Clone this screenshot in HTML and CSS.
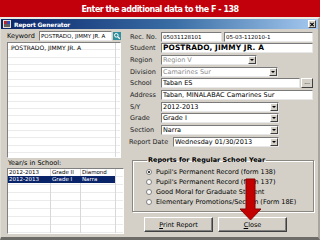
FILE: index.html
```html
<!DOCTYPE html>
<html>
<head>
<meta charset="utf-8">
<link rel="stylesheet" href="styles.css">
</head>
<body>
<div class="banner">Enter the additional data to the F - 138</div>
<div class="window">
  <div class="titlebar">
    <svg class="appicon" width="8" height="8" viewBox="0 0 8 8"><rect x="0" y="0" width="8" height="8" fill="#e8e0d0"/><rect x="1" y="1" width="3" height="3" fill="#c02020"/><rect x="4" y="1" width="3" height="3" fill="#2050c0"/><rect x="1" y="4" width="6" height="3" fill="#606060"/></svg>
    <span class="ttext">Report Generator</span>
    <div class="xbtn"><svg width="7" height="7" viewBox="0 0 7 7"><path d="M1.5 1.5 L5.5 5.5 M5.5 1.5 L1.5 5.5" stroke="#000" stroke-width="1.3"/></svg></div>
  </div>
  <div class="body">
    <div class="left">
      <div class="kwrow">
        <span class="kwlabel">Keyword</span>
        <div class="field kwinput">POSTRADO, JIMMY JR. A</div>
        <div class="searchbtn"><svg width="8" height="8" viewBox="0 0 8 8"><rect width="8" height="8" fill="#2f8f9f"/><circle cx="3.3" cy="3.3" r="1.8" fill="none" stroke="#fff" stroke-width="1"/><path d="M4.6 4.6 L6.8 6.8" stroke="#fff" stroke-width="1.3"/></svg></div>
      </div>
      <div class="listbox">
        <div class="litem">POSTRADO, JIMMY JR. A</div>
      </div>
      <div class="ylabel">Year/s in School:</div>
      <div class="ytable">
        <div class="yrow"><span class="c1">2012-2013</span><span class="c2">Grade II</span><span class="c3">Diamond</span></div>
        <div class="yrow sel"><span class="c1">2012-2013</span><span class="c2">Grade I</span><span class="c3">Narra</span></div>
      </div>
    </div>
    <div class="right">
      <div class="form">
        <div class="row"><span class="lbl">Rec. No.</span><div class="field w61 small">05031128101</div><div class="field wrec small">05-03-112010-1</div></div>
        <div class="row"><span class="lbl">Student</span><div class="field wfull bold">POSTRADO, JIMMY JR. A</div></div>
        <div class="row"><span class="lbl">Region</span><div class="select w96 dis"><span class="stext">Region V</span><span class="dd"></span></div></div>
        <div class="row"><span class="lbl">Division</span><div class="select w117 dis"><span class="stext">Camarines Sur</span><span class="dd"></span></div></div>
        <div class="row"><span class="lbl">School</span><div class="field w139">Taban ES</div><div class="dots">...</div></div>
        <div class="row"><span class="lbl">Address</span><div class="field wfull">Taban, MINALABAC Camarines Sur</div></div>
        <div class="row"><span class="lbl">S/Y</span><div class="select w118"><span class="stext">2012-2013</span><span class="dd"></span></div></div>
        <div class="row"><span class="lbl">Grade</span><div class="select w118"><span class="stext">Grade I</span><span class="dd"></span></div></div>
        <div class="row"><span class="lbl">Section</span><div class="select w118"><span class="stext">Narra</span><span class="dd"></span></div></div>
        <div class="row"><span class="lbl lblwide">Report Date</span><div class="select w106"><span class="stext">Wednesday 01/30/2013</span><span class="dd"></span></div></div>
      </div>
      <fieldset class="group">
        <legend>Reports for Regular School Year</legend>
        <div class="radio"><span class="rc on"></span>Pupil's Permanent Record (form 138)</div>
        <div class="radio"><span class="rc"></span>Pupil's Permanent Record (form 137)</div>
        <div class="radio"><span class="rc"></span>Good Moral for Graduate Student</div>
        <div class="radio"><span class="rc"></span>Elementary Promotions/Section (Form 18E)</div>
      </fieldset>
      <div class="buttons">
        <div class="btn"><u>P</u>rint Report</div>
        <div class="btn"><u>C</u>lose</div>
      </div>
    </div>
  </div>
</div>
<svg class="arrow" width="24" height="44" viewBox="0 0 24 44"><path d="M7 1 H16 V31 H22 L11.5 42 L1 31 H7 Z" fill="#c20000" stroke="#8c0000" stroke-width="1"/></svg>
</body>
</html>
```
FILE: styles.css
```css
* { box-sizing: border-box; margin: 0; padding: 0; }
html, body { width: 320px; height: 240px; overflow: hidden; }
body {
  position: relative;
  background: #fff;
  font-family: "DejaVu Sans", Verdana, sans-serif;
  font-size: 6.5px;
  color: #000;
}
.banner {
  height: 17px;
  background: #c1000c;
  color: #fff;
  font-family: "DejaVu Sans", sans-serif;
  font-weight: bold;
  font-size: 8px;
  letter-spacing: -0.5px;
  text-align: center;
  line-height: 19px;
}
.window {
  height: 223px;
  background: #d4d0c8;
  border-top: 2px solid #ece9e2;
  border-left: 1px solid #e0ddd6;
  border-right: 2px solid #a8a59e;
  border-bottom: 3px solid #6e6c68;
  display: flex;
  flex-direction: column;
}
.titlebar {
  height: 10px;
  background: linear-gradient(to right, #0a246a, #3a6ea5 55%, #a6caf0);
  display: flex;
  align-items: center;
  padding: 0 2px 0 2px;
  color: #fff;
  font-weight: bold;
  font-size: 6px;
}
.appicon { margin-right: 3px; }
.ttext { flex: 1; letter-spacing: -0.2px; }
.xbtn {
  width: 8px; height: 8px;
  background: #d4d0c8;
  border: 1px solid; border-color: #fff #404040 #404040 #fff;
  display: flex; align-items: center; justify-content: center;
}
.xbtn svg { display: block; }
.body {
  flex: 1;
  display: flex;
  padding: 2px 0 0 6px;
}
.left { width: 117px; display: flex; flex-direction: column; }
.kwrow { height: 10px; display: flex; align-items: center; }
.kwlabel { width: 32px; }
.kwinput { width: 73px; height: 9px; font-size: 5.5px; }
.searchbtn { width: 9px; height: 9px; display: flex; align-items: center; justify-content: center; }
.field {
  background: #fff;
  border: 1px solid;
  border-color: #7a7a7a #e8e8e8 #e8e8e8 #7a7a7a;
  height: 10px;
  line-height: 8px;
  padding-left: 1px;
  white-space: nowrap;
  overflow: hidden;
}
.listbox {
  margin-top: 1px;
  width: 114px;
  height: 116px;
  background-color: #fff;
  background-image:
    linear-gradient(to right, transparent 107px, #d8d8d8 107px, #d8d8d8 108px, transparent 108px),
    repeating-linear-gradient(to bottom, transparent 0, transparent 6.33px, #ebebeb 6.33px, #ebebeb 7.33px);
  border: 1px solid; border-color: #808080 #fff #fff #808080;
  padding: 1px 0 0 3px;
  font-size: 6px;
}
.litem { line-height: 7.33px; }
.ylabel { height: 10px; line-height: 11px; padding-left: 1px; }
.ytable {
  width: 117px;
  height: 66px;
  background-color: #fff;
  background-image:
    linear-gradient(to right, transparent 42px, #d8d8d8 42px, #d8d8d8 43px, transparent 43px, transparent 72px, #d8d8d8 72px, #d8d8d8 73px, transparent 73px, transparent 107px, #d8d8d8 107px, #d8d8d8 108px, transparent 108px),
    repeating-linear-gradient(to bottom, transparent 0, transparent 7px, #ebebeb 7px, #ebebeb 8px);
  border: 1px solid #808080;
  border-right-color: #fff; border-bottom-color: #fff;
  font-size: 5.5px;
}
.yrow { display: flex; height: 7px; line-height: 7px; width: 107px; }
.yrow.sel { background: #0a246a; color: #fff; }
.c1 { width: 43px; padding-left: 1px; }
.c2 { width: 30px; padding-left: 1px; }
.c3 { width: 34px; padding-left: 1px; }
.right { width: 189px; margin-left: 1px; display: flex; flex-direction: column; }
.form { display: flex; flex-direction: column; }
.row { height: 11.67px; display: flex; align-items: center; }
.lbl { width: 36px; padding-left: 5px; color: #222; }
.lblwide { width: 48px; padding-left: 4px; }
.w61 { width: 61px; margin-right: 2px; }
.wrec { width: 89px; }
.wfull { width: 152px; }
.w139 { width: 139px; margin-right: 1px; }
.small { font-size: 5.5px; }
.bold { font-weight: bold; font-size: 7.4px; letter-spacing: 0.1px; }
.select {
  display: flex;
  height: 10px;
  background: #fff;
  border: 1px solid; border-color: #7a7a7a #e8e8e8 #e8e8e8 #7a7a7a;
}
.select .stext { flex: 1; line-height: 8px; padding-left: 1px; white-space: nowrap; overflow: hidden; }
.select.dis .stext { color: #8c8c8c; }
.dd {
  width: 8px;
  background: #d4d0c8;
  border: 1px solid; border-color: #fff #404040 #404040 #fff;
  display: flex; align-items: center; justify-content: center;
}
.dd::after {
  content: "";
  border-left: 2px solid transparent;
  border-right: 2px solid transparent;
  border-top: 2px solid #000;
}
.w96 { width: 96px; }
.w117 { width: 117px; }
.w118 { width: 118px; }
.w106 { width: 106px; }
.dots {
  width: 12px; height: 10px;
  background: #d4d0c8;
  border: 1px solid; border-color: #fff #404040 #404040 #fff;
  text-align: center; line-height: 6px; font-size: 6px;
}
.group {
  margin: 8.5px 0 0 7px;
  width: 182px;
  border: 1px solid #8a8780;
  box-shadow: inset 1px 1px 0 #fff, 1px 1px 0 #fff;
  padding: 3px 0 4px 13px;
}
.group legend {
  font-weight: bold;
  font-size: 6.5px;
  line-height: 8px;
  padding: 0 1px;
  margin-left: 1px;
}
.radio { height: 10px; display: flex; align-items: center; }
.rc {
  width: 6px; height: 6px;
  border-radius: 50%;
  background: #fff;
  border: 1px solid #808080;
  margin-right: 4px;
  position: relative;
}
.rc.on::after {
  content: "";
  position: absolute;
  left: 1px; top: 1px;
  width: 2px; height: 2px;
  border-radius: 50%;
  background: #000;
}
.buttons { display: flex; gap: 5px; margin: 5px 0 0 19px; }
.btn {
  width: 69px; height: 15px;
  background: #d4d0c8;
  border: 1px solid; border-color: #fff #404040 #404040 #fff;
  box-shadow: inset -1px -1px 0 #808080;
  text-align: center;
  line-height: 14px;
  font-size: 6.5px;
}
.arrow { position: absolute; left: 239px; top: 178px; }
```
